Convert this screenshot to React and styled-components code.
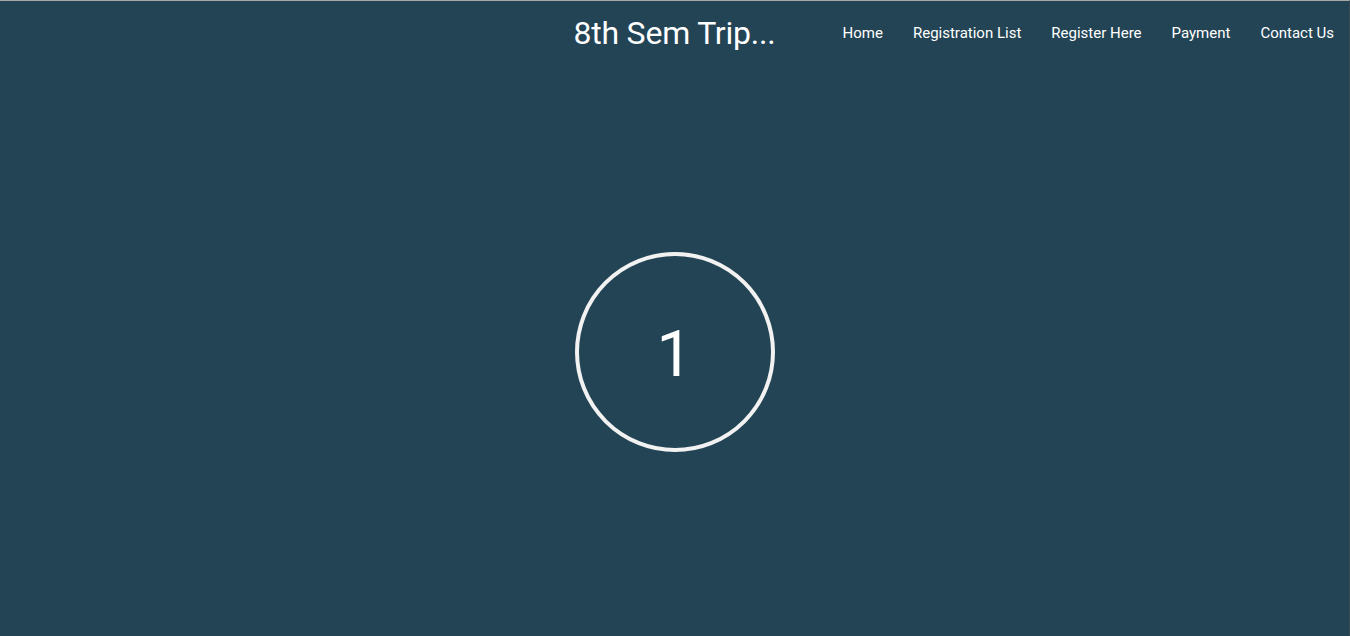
import React from "react";
import styled, { createGlobalStyle } from "styled-components";

const GlobalStyle = createGlobalStyle`
  html, body {
    margin: 0;
    padding: 0;
    height: 100%;
    background: #234455;
    font-family: Roboto, "Liberation Sans", Arial, sans-serif;
  }
  #root {
    height: 100%;
  }
`;

const Page = styled.div`
  height: 636px;
  box-sizing: border-box;
  border-top: 1px solid #a8a8a8;
  border-right: 1px solid #3a4a52;
  background: #234455;
  color: #ffffff;
  display: flex;
  flex-direction: column;
  overflow: hidden;
`;

const Header = styled.header`
  display: grid;
  grid-template-columns: 1fr auto 1fr;
  align-items: center;
  height: 64px;
`;

const Title = styled.h1`
  grid-column: 2;
  margin: 0;
  font-size: 32px;
  font-weight: 400;
  letter-spacing: -0.2px;
  white-space: nowrap;
`;

const Nav = styled.nav`
  grid-column: 3;
  justify-self: end;
  display: flex;
  gap: 30px;
  margin-right: 15px;
`;

const NavLink = styled.a`
  color: #ffffff;
  text-decoration: none;
  font-size: 15px;
  font-weight: 400;
  white-space: nowrap;
  cursor: pointer;
`;

const Main = styled.main`
  flex: 1;
  display: flex;
  justify-content: center;
  padding-top: 187px;
`;

const Counter = styled.div`
  width: 200px;
  height: 200px;
  box-sizing: border-box;
  border: 4px solid #f2f2f2;
  border-radius: 50%;
  display: flex;
  align-items: center;
  justify-content: center;
  padding-top: 4px;
  font-size: 64px;
  font-weight: 400;
  color: #ffffff;
`;

const links = ["Home", "Registration List", "Register Here", "Payment", "Contact Us"];

export default function App() {
  return (
    <>
      <GlobalStyle />
      <Page>
        <Header>
          <Title>8th Sem Trip...</Title>
          <Nav>
            {links.map((l) => (
              <NavLink key={l}>{l}</NavLink>
            ))}
          </Nav>
        </Header>
        <Main>
          <Counter>1</Counter>
        </Main>
      </Page>
    </>
  );
}
